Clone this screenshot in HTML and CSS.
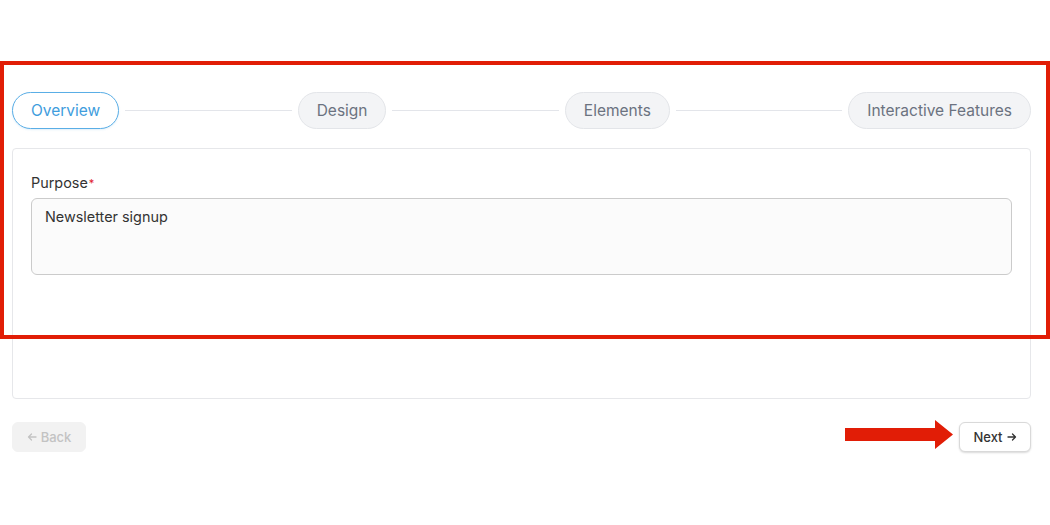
FILE: index.html
```html
<!DOCTYPE html>
<html>
<head>
<meta charset="utf-8">
<link rel="stylesheet" href="styles.css">
</head>
<body>
<div class="page">
  <div class="steps">
    <div class="pill active">Overview</div>
    <div class="line"></div>
    <div class="pill">Design</div>
    <div class="line"></div>
    <div class="pill">Elements</div>
    <div class="line"></div>
    <div class="pill">Interactive Features</div>
  </div>
  <div class="card">
    <label class="label">Purpose<span class="req">*</span></label>
    <div class="textarea">Newsletter signup</div>
  </div>
  <div class="actions">
    <button class="btn back"><svg class="ico" width="10" height="10" viewBox="0 0 10 10"><path d="M9 5H1.5M4.5 2L1.5 5L4.5 8" fill="none" stroke="currentColor" stroke-width="1.3" stroke-linecap="round" stroke-linejoin="round"/></svg>Back</button>
    <button class="btn next">Next<svg class="ico after" width="10" height="10" viewBox="0 0 10 10"><path d="M1 5H8.5M5.5 2L8.5 5L5.5 8" fill="none" stroke="currentColor" stroke-width="1.3" stroke-linecap="round" stroke-linejoin="round"/></svg></button>
  </div>
</div>
<div class="highlight"></div>
<div class="arrow">
  <svg width="110" height="32" viewBox="0 0 110 32"><path d="M0 9 H90 V1 L108 15.5 L90 30 V22 H0 Z" fill="#e11d06"/></svg>
</div>
</body>
</html>
```
FILE: styles.css
```css
html, body { margin: 0; padding: 0; background: #fff; }
body { font-family: Inter, "Liberation Sans", Arial, sans-serif; color: #333; width: 1050px; height: 525px; overflow: hidden; position: relative; }
.page { padding: 92px 19px 0 12px; }
.steps { display: flex; align-items: center; }
.pill { height: 37px; box-sizing: border-box; padding: 0 18px; border-radius: 19px; border: 1px solid #e3e5e9; background: #f3f4f6; color: #6b7280; font-size: 15.5px; display: flex; align-items: center; white-space: nowrap; }
.pill.active { background: #fff; border-color: #5aaee6; color: #3f9ddd; box-shadow: 0 1px 2px rgba(63,157,221,0.15); }
.line { flex: 1; height: 1px; background: #e3e5ea; margin: 0 6px; }
.card { margin-top: 19px; height: 251px; box-sizing: border-box; border: 1px solid #e6e7ea; border-radius: 4px; padding: 24px 18px 0 18px; }
.label { display: block; font-size: 14.4px; line-height: 20px; color: #333; margin-bottom: 5px; }
.req { color: #e0202a; font-size: 11px; vertical-align: top; margin-left: 1px; }
.textarea { height: 77px; box-sizing: border-box; border: 1px solid #cbcbcb; border-radius: 6px; background: #fbfbfb; padding: 9px 13px; font-size: 14.4px; line-height: 18px; color: #333; }
.actions { display: flex; justify-content: space-between; margin-top: 23px; }
.btn { font-family: inherit; font-size: 13px; font-weight: 500; height: 30px; border-radius: 6px; cursor: pointer; display: inline-flex; align-items: center; justify-content: center; gap: 4px; padding: 0; }
.ico { display: block; }
.back { width: 74px; background: #f2f2f2; border: 1px solid #f2f2f2; color: #c3c3c3; }
.next { width: 72px; background: #fff; border: 1px solid #d9d9d9; color: #333; box-shadow: 0 1px 2px rgba(0,0,0,0.15); }
.highlight { position: absolute; left: 0; top: 61px; width: 1050px; height: 278px; box-sizing: border-box; border: 4px solid #e11d06; pointer-events: none; }
.arrow { position: absolute; left: 845px; top: 419px; width: 110px; height: 32px; }
.arrow svg { display: block; }
```
